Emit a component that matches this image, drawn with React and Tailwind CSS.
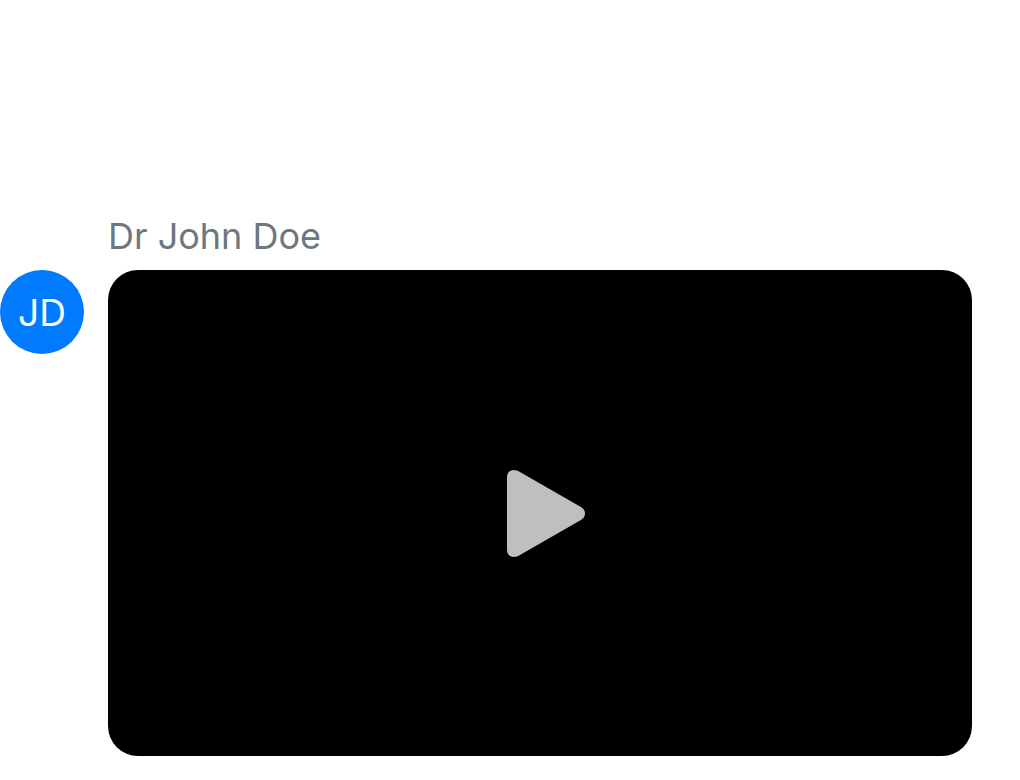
export default function App() {
  return (
    <main className="min-h-screen bg-white pt-54 pr-12 pb-6 font-['Inter',sans-serif]">
      <article className="grid grid-cols-[84px_minmax(0,1fr)] gap-x-6 gap-y-3.5">
        <h2 className="col-start-2 text-[36px] leading-10 font-normal text-[#6e777f]">Dr John Doe</h2>
        <div className="col-start-1 flex size-21 items-center justify-center rounded-full bg-[#007aff] text-[37px] leading-none text-white">
          JD
        </div>
        <button
          type="button"
          aria-label="Play video"
          className="flex aspect-video w-full items-center justify-center rounded-[30px] bg-black"
        >
          <svg viewBox="0 -1 78 88" className="ml-3 h-[88px] w-[78px]" aria-hidden="true">
            <path
              d="M0 7.500C0 2.500 3 0 7 0C9 0 10.800 0.800 12.500 1.700L73.500 36.800C76.500 38.600 78 40.500 78 43.500C78 46.500 76.500 48.400 73.500 50.200L12.500 85.300C10.800 86.200 9 87 7 87C3 87 0 84.500 0 79.500Z"
              fill="#bfbfbf"
            />
          </svg>
        </button>
      </article>
    </main>
  );
}
